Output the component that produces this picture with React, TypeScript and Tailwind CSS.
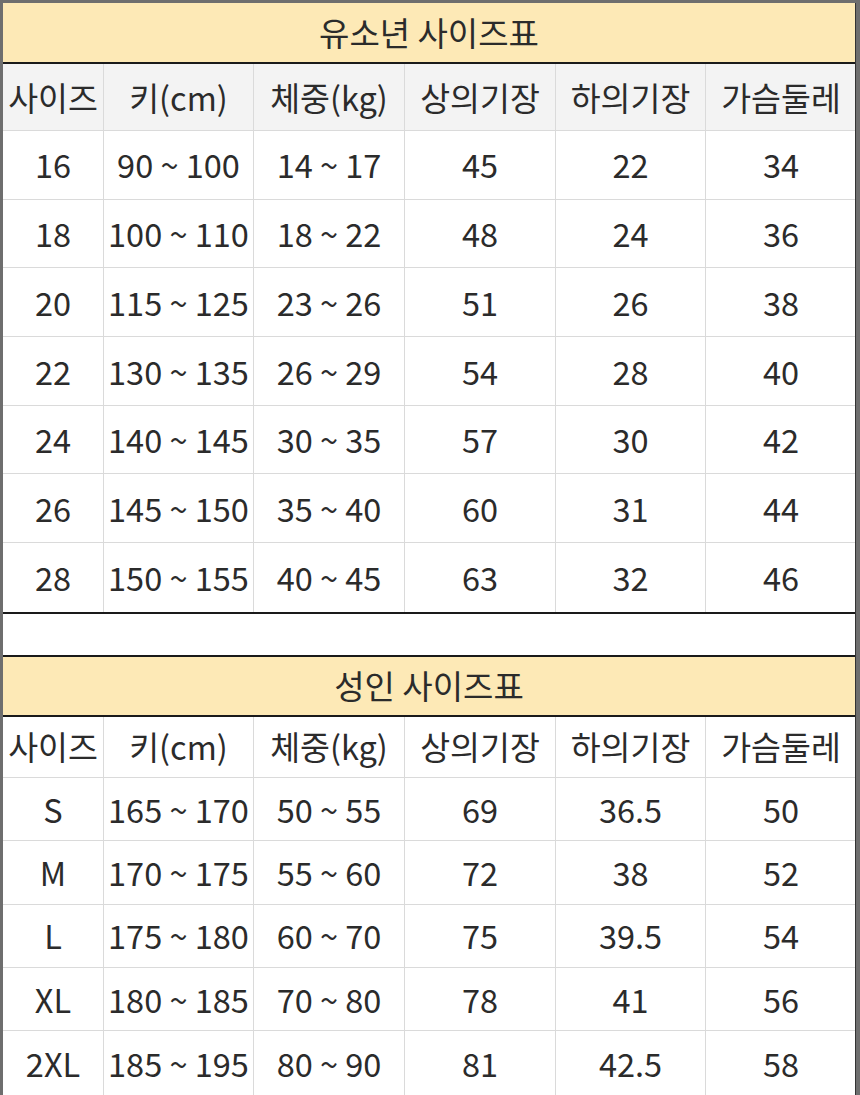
import React from "react";

const headers = ["사이즈", "키(cm)", "체중(kg)", "상의기장", "하의기장", "가슴둘레"];

const youth = [
  ["16", "90 ~ 100", "14 ~ 17", "45", "22", "34"],
  ["18", "100 ~ 110", "18 ~ 22", "48", "24", "36"],
  ["20", "115 ~ 125", "23 ~ 26", "51", "26", "38"],
  ["22", "130 ~ 135", "26 ~ 29", "54", "28", "40"],
  ["24", "140 ~ 145", "30 ~ 35", "57", "30", "42"],
  ["26", "145 ~ 150", "35 ~ 40", "60", "31", "44"],
  ["28", "150 ~ 155", "40 ~ 45", "63", "32", "46"],
];

const adult = [
  ["S", "165 ~ 170", "50 ~ 55", "69", "36.5", "50"],
  ["M", "170 ~ 175", "55 ~ 60", "72", "38", "52"],
  ["L", "175 ~ 180", "60 ~ 70", "75", "39.5", "54"],
  ["XL", "180 ~ 185", "70 ~ 80", "78", "41", "56"],
  ["2XL", "185 ~ 195", "80 ~ 90", "81", "42.5", "58"],
];

function Row({ cells, h, bg, last }: { cells: string[]; h: string; bg?: string; last?: boolean }) {
  return (
    <div className={`grid grid-cols-[101px_150px_151px_151px_150px_150px] ${h} ${bg ?? ""} ${last ? "" : "border-b border-[#dadada]"}`}>
      {cells.map((c, i) => (
        <div
          key={i}
          className={`flex items-center justify-center whitespace-nowrap ${i < 5 ? "border-r border-[#dadada]" : ""}`}
        >
          {c}
        </div>
      ))}
    </div>
  );
}

export default function App() {
  return (
    <div
      className="w-[860px] h-[1095px] overflow-hidden bg-[#6e6e6e] pt-[3px] pl-[3px] pr-[4px] text-[#2b2b2b]"
      style={{ fontFamily: '"Noto Sans CJK KR", "Noto Sans", sans-serif' }}
    >
      <div className="bg-white h-full flex flex-col border-r border-[#333]">
        {/* Youth table */}
        <div className="h-[61px] bg-[#fde9b6] flex items-center justify-center text-[33px] border-b-2 border-[#1a1a1a]">
          유소년 사이즈표
        </div>
        <div className="text-[32.5px]">
          <Row cells={headers} h="h-[67px]" bg="bg-[#f3f3f3]" />
          {youth.map((r, i) => (
            <Row key={i} cells={r} h="h-[68.7px]" last={i === youth.length - 1} />
          ))}
        </div>
        <div className="border-t-2 border-[#1a1a1a] h-[43px] shrink-0" />
        <div className="h-[62px] shrink-0 bg-[#fde9b6] flex items-center justify-center text-[33px] border-t-2 border-b-2 border-[#1a1a1a]">
          성인 사이즈표
        </div>
        <div className="text-[32.5px]">
          <Row cells={headers} h="h-[61px]" />
          {adult.map((r, i) => (
            <Row key={i} cells={r} h="h-[63.4px]" last={i === adult.length - 1} />
          ))}
        </div>
      </div>
    </div>
  );
}
